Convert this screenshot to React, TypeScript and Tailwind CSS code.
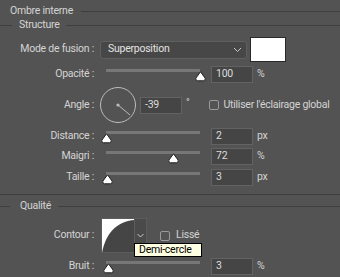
import React from 'react';

// Photoshop-like "Ombre interne" layer style panel

const Thumb = ({ x }: { x: number }) => (
  <svg
    width="11"
    height="11"
    viewBox="0 0 11 11"
    className="absolute top-[5px]"
    style={{ left: x - 5.5 }}
  >
    <path
      d="M5.5 0.8 L10.2 7.2 Q10.6 9.8 8.4 9.8 L2.6 9.8 Q0.4 9.8 0.8 7.2 Z"
      fill="#ffffff"
      stroke="#1e1e1e"
      strokeWidth="1"
    />
  </svg>
);

const Label = ({ children }: { children: React.ReactNode }) => (
  <div className="w-[94px] shrink-0 text-right whitespace-nowrap">{children}</div>
);

const NumBox = ({ value, className = '' }: { value: string; className?: string }) => (
  <div
    className={`w-[42px] h-[17px] shrink-0 border border-[#626262] bg-[#454545] pl-[4px] flex items-center text-[#dcdcdc] ${className}`}
  >
    {value}
  </div>
);

const Checkbox = () => (
  <div className="w-[10px] h-[10px] shrink-0 rounded-[2px] border border-[#9a9a9a]" />
);

// slider: track from x=106 to x=200, pos is 0..1
const SliderRow = ({
  label,
  pos,
  value,
  unit,
  className = '',
}: {
  label: string;
  pos: number;
  value: string;
  unit: string;
  className?: string;
}) => (
  <div className={`flex items-center h-[17px] ${className}`}>
    <Label>{label}</Label>
    <div className="relative w-[111px] h-[17px] ml-[6px] shrink-0">
      <div className="ml-[6px] mt-[3px] w-[94px] h-[3px] bg-[#777777]" />
      <Thumb x={6 + pos * 94} />
    </div>
    <NumBox value={value} />
    <span className="ml-[4px]">{unit}</span>
  </div>
);

const Line = ({ className = '' }: { className?: string }) => (
  <div className={`h-px bg-[#3f3f3f] ${className}`} />
);

export default function App() {
  return (
    <div className="w-[340px] h-[277px] overflow-hidden bg-[#535353] text-[#d4d4d4] text-[10.5px] tracking-[-0.25px] font-[Roboto,'Liberation_Sans',sans-serif] leading-none">
      {/* title */}
      <div className="mt-[2px] h-[18px] flex items-center">
        <span className="ml-[10px]">Ombre interne</span>
        <Line className="flex-1 ml-[8px]" />
      </div>

      {/* Structure */}
      <div className="h-[10px] flex items-center">
        <Line className="w-[12px]" />
        <span className="ml-[7px]">Structure</span>
        <Line className="flex-1 ml-[6px]" />
      </div>

      {/* Mode de fusion */}
      <div className="mt-[7px] h-[25px] flex items-center">
        <Label>Mode de fusion :</Label>
        <div className="ml-[6px] w-[147px] h-[18px] rounded-[3px] border border-[#5f5f5f] bg-[#474747] flex items-center justify-between pl-[7px] pr-[4px]">
          <span className="text-[#e2e2e2]">Superposition</span>
          <svg width="9" height="6" viewBox="0 0 9 6">
            <path d="M1 1 L4.5 4.5 L8 1" fill="none" stroke="#c8c8c8" strokeWidth="1" />
          </svg>
        </div>
        <div className="ml-[3px] w-[36px] h-[25px] border border-[#2a2a2a] bg-white" />
      </div>

      <SliderRow label="Opacité :" pos={1} value="100" unit="%" className="mt-[4px]" />

      {/* Angle */}
      <div className="mt-[4px] h-[36px] flex items-center">
        <Label>Angle :</Label>
        <svg width="36" height="36" viewBox="0 0 36 36" className="ml-[6px] shrink-0">
          <circle cx="18" cy="18" r="17.5" fill="none" stroke="#bcbcbc" strokeWidth="1" />
          <circle cx="18" cy="18" r="1.6" fill="#bcbcbc" />
          <line x1="18" y1="18" x2="30" y2="28" stroke="#bcbcbc" strokeWidth="1" />
        </svg>
        <NumBox value="-39" className="ml-[4px]" />
        <span className="ml-[4px] self-start mt-[11px] text-[10px]">°</span>
        <div className="ml-[19px] flex items-center">
          <Checkbox />
          <span className="ml-[5px] whitespace-nowrap">Utiliser l'éclairage global</span>
        </div>
      </div>

      <SliderRow label="Distance :" pos={0.007} value="2" unit="px" className="mt-[5px]" />
      <SliderRow label="Maigri :" pos={0.72} value="72" unit="%" className="mt-[3px]" />
      <SliderRow label="Taille :" pos={0.012} value="3" unit="px" className="mt-[4px]" />

      <Line className="mt-[8px]" />

      {/* Qualité */}
      <div className="h-[22px] flex items-center">
        <Line className="w-[10px]" />
        <span className="ml-[10px]">Qualité</span>
        <Line className="flex-1 ml-[7px]" />
      </div>

      {/* Contour */}
      <div className="relative mt-[1px] h-[35px] flex items-center">
        <Label>Contour :</Label>
        <div className="ml-[7px] flex h-[35px]">
          <svg width="34" height="35" viewBox="0 0 34 35" className="shrink-0">
            <rect x="0" y="0" width="34" height="35" fill="#ffffff" />
            <path d="M1 35 C4 18 14 3 34 2 L34 35 Z" fill="#454545" />
            <rect x="0.5" y="0.5" width="33" height="34" fill="none" stroke="#5c5c5c" />
          </svg>
          <div className="w-[12px] h-[35px] border border-[#5c5c5c] border-l-0 bg-[#4a4a4a] flex items-center justify-center">
            <svg width="7" height="5" viewBox="0 0 7 5">
              <path d="M0.5 1 L3.5 4 L6.5 1" fill="none" stroke="#c8c8c8" strokeWidth="1" />
            </svg>
          </div>
        </div>
        <div className="ml-[13px] flex items-center">
          <Checkbox />
          <span className="ml-[6px]">Lissé</span>
        </div>
        {/* tooltip */}
        <div className="absolute left-[134px] top-[25px] h-[14px] w-[68px] border border-black bg-[#ffffe1] text-black pl-[4px] flex items-center">
          Demi-cercle
        </div>
      </div>

      <SliderRow label="Bruit :" pos={0.03} value="3" unit="%" className="mt-[5px]" />
    </div>
  );
}
